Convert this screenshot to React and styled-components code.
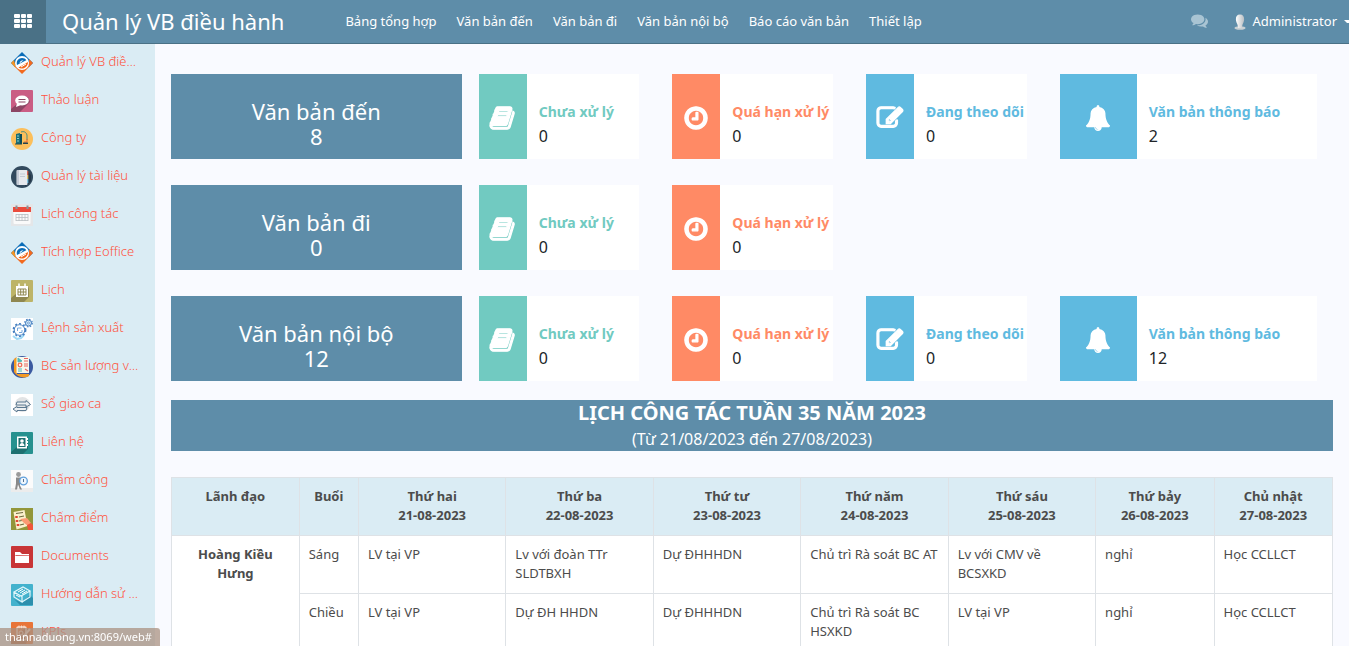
import React from 'react';
import styled, { createGlobalStyle } from 'styled-components';

const GlobalStyle = createGlobalStyle`
    * {
        box-sizing: border-box;
    }

    body {
        margin: 0;
        background: #f9faff;
        color: #4c4c4c;
        font-family: "Noto Sans", "Open Sans", sans-serif;
        font-size: 13px;
        line-height: 19px;
    }

    a {
        color: inherit;
        text-decoration: none;
    }
`;

const faPaths = {
  comments: 'M1408 768q0 139-94 257t-256.5 186.5-353.5 68.5q-86 0-176-16-124 88-278 128-36 9-86 16h-3q-11 0-20.5-8t-11.5-21q-1-3-1-6.5t.5-6.5 2-6l2.5-5 3.5-5.5 4-5 4.5-5 4-4.5q5-6 23-25t26-29.5 22.5-29 25-38.5 20.5-44q-124-72-195-177t-71-224q0-139 94-257t256.5-186.5 353.5-68.5 353.5 68.5 256.5 186.5 94 257zm384 256q0 120-71 224.5t-195 176.5q10 24 20.5 44t25 38.5 22.5 29 26 29.5 23 25q1 1 4 4.5t4.5 5 4 5 3.5 5.5l2.5 5 2 6 .5 6.5-1 6.5q-3 14-13 22t-22 7q-50-7-86-16-154-40-278-128-90 16-176 16-271 0-472-132 58 4 88 4 161 0 309-45t264-129q125-92 192-212t67-254q0-77-23-152 129 71 204 178t75 230z',
  book: 'M1639 478q40 57 18 129l-275 906q-19 64-76.5 107.5t-122.5 43.5h-923q-77 0-148.5-53.5t-99.5-131.5q-24-67-2-127 0-4 3-27t4-37q1-8-3-21.5t-3-19.5q2-11 8-21t16.5-23.5 16.5-23.5q23-38 45-91.5t30-91.5q3-10 .5-30t-.5-28q3-11 17-28t17-23q21-36 42-92t25-90q1-9-2.5-32t.5-28q4-13 22-30.5t22-22.5q19-26 42.5-84.5t27.5-96.5q1-8-3-25.5t-2-26.5q2-8 9-18t18-23 17-21q8-12 16.5-30.5t15-35 16-36 19.5-32 26.5-23.5 36-11.5 47.5 5.5l-1 3q38-9 51-9h761q74 0 114 56t18 130l-274 906q-36 119-71.5 153.5t-128.5 34.5h-869q-27 0-38 15-11 16-1 43 24 70 144 70h923q29 0 56-15.5t35-41.5l300-987q7-22 5-57 38 15 59 43zm-1064 2q-4 13 2 22.5t20 9.5h608q13 0 25.5-9.5t16.5-22.5l21-64q4-13-2-22.5t-20-9.5h-608q-13 0-25.5 9.5t-16.5 22.5zm-83 256q-4 13 2 22.5t20 9.5h608q13 0 25.5-9.5t16.5-22.5l21-64q4-13-2-22.5t-20-9.5h-608q-13 0-25.5 9.5t-16.5 22.5z',
  clock: 'M1024 544v448q0 14-9 23t-23 9h-320q-14 0-23-9t-9-23v-64q0-14 9-23t23-9h224v-352q0-14 9-23t23-9h64q14 0 23 9t9 23zm416 352q0-148-73-273t-198-198-273-73-273 73-198 198-73 273 73 273 198 198 273 73 273-73 198-198 73-273zm224 0q0 209-103 385.5t-279.5 279.5-385.5 103-385.5-103-279.5-279.5-103-385.5 103-385.5 279.5-279.5 385.5-103 385.5 103 279.5 279.5 103 385.5z',
  edit: 'M888 1184l116-116-152-152-116 116v56h96v96h56zm440-720q-16-16-33 1l-350 350q-17 17-1 33t33-1l350-350q17-17 1-33zm80 594v190q0 119-84.5 203.5t-203.5 84.5h-832q-119 0-203.5-84.5t-84.5-203.5v-832q0-119 84.5-203.5t203.5-84.5h832q63 0 117 25 15 7 18 23 3 17-9 29l-49 49q-14 14-32 8-23-6-45-6h-832q-66 0-113 47t-47 113v832q0 66 47 113t113 47h832q66 0 113-47t47-113v-126q0-13 9-22l64-64q15-15 35-7t20 29zm-96-738l288 288-672 672h-288v-288zm444 132l-92 92-288-288 92-92q28-28 68-28t68 28l152 152q28 28 28 68t-28 68z',
  bell: 'M912 1696q0-16-16-16-59 0-101.5-42.5t-42.5-101.5q0-16-16-16t-16 16q0 73 51.5 124.5t124.5 51.5q16 0 16-16zm816-288q0 52-38 90t-90 38h-448q0 106-75 181t-181 75-181-75-75-181h-448q-52 0-90-38t-38-90q50-42 91-88t85-119.5 74.5-158.5 50-206 19.5-260q0-152 117-282.5t307-158.5q-8-19-8-39 0-40 28-68t68-28 68 28 28 68q0 20-8 39 190 28 307 158.5t117 282.5q0 139 19.5 260t50 206 74.5 158.5 85 119.5 91 88z',
};

// weight thickens the glyph, in font units
const FaIcon = ({ name, size, weight = 0 }) => (
  <svg width={size} height={size} viewBox="0 0 1792 1792" fill="currentColor" stroke="currentColor" strokeWidth={weight} overflow="visible" aria-hidden="true">
    <path d={faPaths[name]} />
  </svg>
);

const GridIcon = () => (
  <svg width="19" height="15" viewBox="0 0 19 15" fill="#fff" aria-hidden="true">
    {[0, 5, 10].map(y => [0, 7, 13].map(x => (
      <rect key={`${x}-${y}`} x={x} y={y} width={x === 0 ? 6 : 5} height="4" rx="1" />
    )))}
  </svg>
);

const AvatarIcon = () => (
  <svg width="12" height="16" viewBox="0 0 12 16" aria-hidden="true">
    <defs>
      <linearGradient id="avatar" x1="0" x2="1">
        <stop offset="0" stopColor="#fff" />
        <stop offset="1" stopColor="#b9bec2" />
      </linearGradient>
    </defs>
    <ellipse cx="6" cy="14" rx="5.5" ry="1.8" fill="#c9d0d3" />
    <path d="M6 0.5c3 0 4.3 2 4.1 5.2-.2 2.3-1.2 3.7-1.7 5.2L8 14H4l-.4-3.1C3.1 9.4 2.1 8 1.9 5.7 1.7 2.5 3 .5 6 .5z" fill="url(#avatar)" />
  </svg>
);

const EofficeArt = () => (
  <>
    <path d="M11 0L22 11 18 15 4 15 0 11z" fill="#0a6db8" />
    <path d="M18 7l4 4-11 11L3 14l15-4z" fill="#f26a1e" />
    <path d="M0 11l3-3 2 8z" fill="#f7931e" />
    <circle cx="11" cy="11" r="7" fill="#fff" />
    <path d="M6 13c-1.200-4 1.500-7 5-7 2 0 3.500.8 4.300 2.200z" fill="#0a6db8" />
    <path d="M8.500 11.500c.3-2 1.800-3.200 4-3.200z" fill="#fff" />
    <path d="M7.500 15.500L17 10c0 4-3 6.500-6 6.500-1.500 0-2.500-.3-3.500-1z" fill="#f26a1e" />
    <path d="M10 15l5-3" stroke="#fff" strokeWidth="1" />
  </>
);

const art = {
  eoffice: <EofficeArt />,
  chat: (
    <>
      <rect width="22" height="22" rx="1" fill="#ca5d84" />
      <path d="M0 22V19L6 14 17 7l2 5L9 22z" fill="#8d4664" />
      <ellipse cx="11" cy="10.5" rx="6.8" ry="5" fill="#fff" />
      <path d="M6 13l-1 4 5-2z" fill="#fff" />
      <path d="M7.500 9.500h7M7.500 12h7" stroke="#8d4664" strokeWidth="1" />
    </>
  ),
  company: (
    <>
      <circle cx="11" cy="11" r="11" fill="#fcbf5b" />
      <path d="M5 6l4-1v11H5z" fill="#1b6f79" />
      <path d="M9 6h2v10H9z" fill="#0e4d57" />
      <path d="M6 8h2M6 10.500h2M6 13h2" stroke="#8fd0c8" strokeWidth="1" />
      <path d="M10 4c3-1 5 0 6 3v5" fill="none" stroke="#4c8e80" strokeWidth="1" />
      <path d="M13 14h3v-3" fill="none" stroke="#e46a3c" strokeWidth="1" />
      <path d="M4 16h7" stroke="#1d4e57" strokeWidth="1" />
      <path d="M12 14.500h5v1.500h-5z" fill="#28434d" />
    </>
  ),
  docs: (
    <>
      <circle cx="11" cy="11" r="11" fill="#324a5e" />
      <path d="M16 5l4 4v6l-6 6z" fill="#243748" />
      <rect x="5.5" y="4" width="11" height="15" rx="1" fill="#e6e9ee" />
      <path d="M7 4v15" stroke="#a4afc1" strokeWidth="1" />
      <path d="M9 8h5M9 10.500h5" stroke="#c3cad6" strokeWidth="1" />
      <path d="M16.800 5v4" stroke="#f1543f" strokeWidth="1" />
      <path d="M16.800 9v4" stroke="#ffd05b" strokeWidth="1" />
      <path d="M16.800 13v4" stroke="#84dbff" strokeWidth="1" />
    </>
  ),
  work: (
    <>
      <rect width="22" height="22" fill="#e4e6e8" />
      <rect x="2.5" y="7" width="17" height="13" rx="1" fill="#fafafa" />
      <path d="M2 3h18v5H2z" fill="#ea4b3c" />
      <path d="M5.500 1.500v3.500M16.500 1.500v3.500" stroke="#8c9499" strokeWidth="2" />
      <path d="M5 10.500h12M5 13.500h12M5 16.500h12M5 10v7M8 10v7M11 10v7M14 10v7M17 10v7" stroke="#b8bec2" strokeWidth=".8" />
    </>
  ),
  calendar: (
    <>
      <rect width="22" height="22" rx="1" fill="#bdb468" />
      <path d="M0 18L6 13 17 6l1 3v8l-5 5H0z" fill="#8f8750" />
      <path d="M5 6h12v11H5z" fill="#fff" />
      <path d="M8 3.500v3M14 3.500v3" stroke="#fff" strokeWidth="1.5" />
      <path d="M7 9h8v6H7zM7 12h8M9.700 9v6M12.300 9v6" fill="none" stroke="#8f8750" strokeWidth="1" />
    </>
  ),
  gears: (
    <>
      <rect width="22" height="22" fill="#fff" />
      <path d="M2 18l4 3 4-1 3-3" fill="none" stroke="#9ed8f5" strokeWidth="2" />
      <circle cx="8.5" cy="12" r="6.2" fill="none" stroke="#447fc1" strokeWidth="1.5" strokeDasharray="2 2" />
      <circle cx="8.5" cy="12" r="5.3" fill="#fff" stroke="#447fc1" strokeWidth="1" />
      <path d="M6.500 13v-3h4M8 14.500h3V12" fill="none" stroke="#74a8df" strokeWidth="1" />
      <circle cx="17.5" cy="5" r="3.8" fill="none" stroke="#447fc1" strokeWidth="1.2" strokeDasharray="1.5 1.5" />
      <circle cx="17.5" cy="5" r="3" fill="#d6eaf9" stroke="#447fc1" strokeWidth="1" />
      <circle cx="17.5" cy="5" r="1" fill="#fff" stroke="#447fc1" strokeWidth=".7" />
    </>
  ),
  report: (
    <>
      <circle cx="11" cy="11" r="11" fill="#3b5aa0" />
      <path d="M3 3l3-2v17h12v2c-5 3-12 1-15-4z" fill="#f49b25" />
      <rect x="5.5" y="1" width="12.5" height="16" fill="#f6f8ee" />
      <path d="M7 2v4l4-1zM7 13h4M7 15h4" fill="#53b8b6" stroke="#53b8b6" strokeWidth="1" />
      <circle cx="9" cy="9" r="1.8" fill="none" stroke="#f16d5b" strokeWidth="1.3" />
      <path d="M13 2.500h4M13 5h4M13 8h4M13 10h4M14 13l3 2" fill="none" stroke="#e9665d" strokeWidth="1.2" />
    </>
  ),
  handover: (
    <>
      <rect width="22" height="22" fill="#fff" />
      <circle cx="11.5" cy="10.5" r="7.5" fill="#e2e4e5" />
      <path d="M6 8h9V6.500l4.500 4L15 13v-2H5z" fill="#edf0f2" stroke="#5b7890" strokeWidth="1" />
      <path d="M16 13.500l-1 3H6V18l-4-3 4-2.500v1z" fill="#edf0f2" stroke="#5b7890" strokeWidth="1" />
    </>
  ),
  contact: (
    <>
      <rect width="22" height="22" rx="1" fill="#27918f" />
      <path d="M0 20L6 15 16 5l1 12-5 5H0z" fill="#1d7070" />
      <rect x="6" y="4.5" width="10" height="12" fill="#fff" />
      <rect x="7.5" y="6" width="7" height="9" fill="#1d7070" />
      <circle cx="11" cy="9" r="1.8" fill="#fff" />
      <path d="M8.500 14c0-4 5-4 5 0z" fill="#fff" />
      <path d="M16.500 6v9" stroke="#fff" strokeWidth="1" strokeDasharray="2 1" />
    </>
  ),
  attendance: (
    <>
      <rect width="22" height="22" fill="#fbfbfb" />
      <path d="M0 18h22v4H0z" fill="#ececec" />
      <circle cx="7.5" cy="4.5" r="2.4" fill="#9a9a9a" />
      <path d="M5 7.500h5l2 4-3 1v3l2 4H9l-2-5-1 5H4l1-6z" fill="#8a8a8a" />
      <circle cx="12.5" cy="11" r="3.8" fill="#eef6fd" stroke="#5f9fdc" strokeWidth="1.3" />
      <path d="M12.500 9v3" stroke="#56728f" strokeWidth="1" />
    </>
  ),
  grading: (
    <>
      <rect width="22" height="22" fill="#92963a" />
      <path d="M2.500 4l11-2 3 16-11 3.500z" fill="#fbf0cc" />
      <path d="M5 5.500l7-1M8 9l5-1M8 13l3-.5M9 17l4-1" stroke="#6c6a3e" strokeWidth="1.2" />
      <path d="M5 9h1M5.500 13h1M6.500 17h1" stroke="#e0442e" strokeWidth="2" strokeLinecap="round" />
      <path d="M9 11l7-1 4 5-3 3-4-3z" fill="#fb9a72" />
      <path d="M16 17l4-2 2 2v5h-5z" fill="#f0553a" />
    </>
  ),
  folder: (
    <>
      <rect width="22" height="22" rx="1" fill="#c83537" />
      <path d="M4 6h5l2 2h7v1.500H4z" fill="#fff" />
      <path d="M4 10l14-1v8H4z" fill="#fff" />
      <path d="M5 9.500h13" stroke="#c83537" strokeWidth=".6" />
    </>
  ),
  guide: (
    <>
      <rect width="22" height="22" rx="1" fill="#43b2cd" />
      <path d="M3 15l8 4 8-8 3 3v7H9z" fill="#2c8fad" />
      <path d="M3 8l9-5 7 4-9 5zM3 8v5l8 5v-6M19 7v6l-8 5" fill="none" stroke="#e2f7fb" strokeWidth="1.2" />
      <path d="M7 8l5-3M9 9l5-3M11 10l5-3M5 11l4 2" stroke="#fff" strokeWidth="1" />
    </>
  ),
  kpi: (
    <>
      <rect width="22" height="22" rx="1" fill="#e87539" />
      <path d="M0 18L6 14l9-9 4 5-4 12H0z" fill="#ab5b34" />
      <rect x="6" y="5" width="9" height="13" rx="1" fill="none" stroke="#f4dfd2" strokeWidth="1.5" />
      <path d="M8 3.500v3M10.500 3.500v3M13 3.500v3" stroke="#f4dfd2" strokeWidth="1" />
      <circle cx="10" cy="11" r="2" fill="none" stroke="#f4dfd2" strokeWidth="1" />
      <path d="M12 15l7-8" stroke="#f4dfd2" strokeWidth="2" />
    </>
  ),
};

const navItems = ['Bảng tổng hợp', 'Văn bản đến', 'Văn bản đi', 'Văn bản nội bộ', 'Báo cáo văn bản', 'Thiết lập'];

const apps = [
  { icon: 'eoffice', name: 'Quản lý VB điều hành' },
  { icon: 'chat', name: 'Thảo luận' },
  { icon: 'company', name: 'Công ty' },
  { icon: 'docs', name: 'Quản lý tài liệu' },
  { icon: 'work', name: 'Lịch công tác' },
  { icon: 'eoffice', name: 'Tích hợp Eoffice' },
  { icon: 'calendar', name: 'Lịch' },
  { icon: 'gears', name: 'Lệnh sản xuất' },
  { icon: 'report', name: 'BC sản lượng vận hành' },
  { icon: 'handover', name: 'Sổ giao ca' },
  { icon: 'contact', name: 'Liên hệ' },
  { icon: 'attendance', name: 'Chấm công' },
  { icon: 'grading', name: 'Chấm điểm' },
  { icon: 'folder', name: 'Documents' },
  { icon: 'guide', name: 'Hướng dẫn sử dụng' },
  { icon: 'kpi', name: 'KPIs' },
];

const pending = { icon: 'book', label: 'Chưa xử lý', color: '#71cac1', value: 0 };
const overdue = { icon: 'clock', label: 'Quá hạn xử lý', color: '#ff8a65', value: 0 };
const following = { icon: 'edit', label: 'Đang theo dõi', color: '#5fbae0', value: 0 };
const notice = { icon: 'bell', label: 'Văn bản thông báo', color: '#5fbae0', value: 2 };

const groups = [
  { title: 'Văn bản đến', total: 8, cards: [pending, overdue, following, notice] },
  { title: 'Văn bản đi', total: 0, cards: [pending, overdue] },
  { title: 'Văn bản nội bộ', total: 12, cards: [pending, overdue, following, { ...notice, value: 12 }] },
];

const days = [
  ['Thứ hai', '21-08-2023'],
  ['Thứ ba', '22-08-2023'],
  ['Thứ tư', '23-08-2023'],
  ['Thứ năm', '24-08-2023'],
  ['Thứ sáu', '25-08-2023'],
  ['Thứ bảy', '26-08-2023'],
  ['Chủ nhật', '27-08-2023'],
];

const morning = ['LV tại VP', 'Lv với đoàn TTr SLDTBXH', 'Dự ĐHHHDN', 'Chủ trì Rà soát BC AT', 'Lv với CMV về BCSXKD', 'nghỉ', 'Học CCLLCT'];
const afternoon = ['LV tại VP', 'Dự ĐH HHDN', 'Dự ĐHHHDN', 'Chủ trì Rà soát BC HSXKD', 'LV tại VP', 'nghỉ', 'Học CCLLCT'];

const App = () => {
  return (
    <Shell>
      <GlobalStyle />
      <Header>
        <AppsButton type="button" aria-label="Apps"><GridIcon /></AppsButton>
        <Brand href="#">Quản lý VB điều hành</Brand>
        <Nav>
          {navItems.map(item => <a key={item} href="#">{item}</a>)}
        </Nav>
        <ChatButton type="button" aria-label="Messages"><FaIcon name="comments" size={17} /></ChatButton>
        <UserButton type="button">
          <AvatarIcon />
          Administrator
          <Caret />
        </UserButton>
      </Header>
      <Body>
        <Sidebar>
          {apps.map(app => (
            <AppLink key={app.name} href="#">
              <svg width="22" height="22" viewBox="0 0 22 22" aria-hidden="true">{art[app.icon]}</svg>
              <span>{app.name}</span>
            </AppLink>
          ))}
        </Sidebar>
        <Main>
          {groups.map(group => (
            <StatRow key={group.title}>
              <Total>
                <span>{group.title}</span>
                <span>{group.total}</span>
              </Total>
              {group.cards.map(card => (
                <Card key={card.label}>
                  <CardIcon $color={card.color}>
                    <FaIcon name={card.icon} size={26} weight={card.icon === 'bell' ? 0 : 90} />
                  </CardIcon>
                  <CardText>
                    <CardLabel $color={card.color}>{card.label}</CardLabel>
                    <CardValue>{card.value}</CardValue>
                  </CardText>
                </Card>
              ))}
            </StatRow>
          ))}
          <WeekBanner>
            <h1>LỊCH CÔNG TÁC TUẦN 35 NĂM 2023</h1>
            <p>(Từ 21/08/2023 đến 27/08/2023)</p>
          </WeekBanner>
          <Schedule>
            <colgroup>
              <Col $width="11%" />
              <Col $width="5.1%" />
              {days.map(([name], i) => <Col key={name} $width={i < 5 ? '12.7%' : '10.2%'} />)}
            </colgroup>
            <thead>
              <tr>
                <th>Lãnh đạo</th>
                <th>Buổi</th>
                {days.map(([name, date]) => <th key={name}>{name}<br />{date}</th>)}
              </tr>
            </thead>
            <tbody>
              <tr>
                <th rowSpan="2" scope="rowgroup">Hoàng Kiều Hưng</th>
                <td>Sáng</td>
                {morning.map((text, i) => <td key={i}>{text}</td>)}
              </tr>
              <tr>
                <td>Chiều</td>
                {afternoon.map((text, i) => <td key={i}>{text}</td>)}
              </tr>
            </tbody>
          </Schedule>
        </Main>
      </Body>
      <StatusBubble>thannaduong.vn:8069/web#</StatusBubble>
    </Shell>
  )
}

export default App;

const Shell = styled.div`
    display: flex;
    flex-direction: column;
    height: 100vh;
    overflow: hidden;
`;

const Header = styled.header`
    display: flex;
    flex: none;
    height: 44px;
    border-bottom: 1px solid #4a7186;
    background: #5e8da9;
    color: #fff;
    white-space: nowrap;
`;

const AppsButton = styled.button`
    display: flex;
    align-items: center;
    justify-content: center;
    width: 46px;
    padding: 0;
    border: 0;
    background: #4a7186;
    cursor: pointer;
`;

const Brand = styled.a`
    padding-left: 16px;
    font-size: 22px;
    line-height: 43px;
`;

const Nav = styled.nav`
    display: flex;
    flex: 1;
    gap: 20px;
    padding-left: 61px;
    line-height: 43px;
`;

const ChatButton = styled.button`
    display: flex;
    align-items: center;
    padding: 0 26px 2px 0;
    border: 0;
    background: none;
    color: #a9c4d3;
    cursor: pointer;
`;

const UserButton = styled.button`
    display: flex;
    align-items: center;
    gap: 7px;
    padding: 0;
    border: 0;
    background: none;
    color: inherit;
    font: inherit;
    cursor: pointer;
`;

const Caret = styled.span`
    width: 5px;
    border-top: 3px solid #fff;
    border-left: 3px solid transparent;
`;

const Body = styled.div`
    display: flex;
    flex: 1;
    min-height: 0;
`;

const Sidebar = styled.nav`
    flex: none;
    width: 155px;
    overflow-y: auto;
    scrollbar-width: none;
    background: #daecf4;
`;

const AppLink = styled.a`
    display: flex;
    gap: 8px;
    height: 38px;
    padding: 8px 16px 0 11px;
    color: #ff5340;
    font-weight: 300;

    svg {
        flex: none;
    }

    span {
        overflow: hidden;
        text-overflow: ellipsis;
        white-space: nowrap;
    }
`;

const Main = styled.main`
    flex: 1;
    min-width: 0;
    padding: 30px 16px 0;
    overflow-y: auto;
    scrollbar-width: none;
`;

const StatRow = styled.section`
    display: grid;
    grid-template-columns: 3fr 2fr 2fr 2fr 3fr;
    margin-bottom: 26px;
`;

const Total = styled.div`
    display: flex;
    flex-direction: column;
    height: 85px;
    padding-top: 25px;
    background: #5e8da9;
    color: #fff;
    font-size: 22px;
    line-height: 25px;
    text-align: center;
`;

const Card = styled.div`
    display: flex;
    margin: 0 16px 0 17px;
    min-width: 0;
    background: #fff;
`;

const CardIcon = styled.div`
    display: flex;
    flex: none;
    align-items: center;
    justify-content: center;
    width: 30%;
    padding-top: 3px;
    background: ${props => props.$color};
    color: #fff;
`;

const CardText = styled.div`
    padding: 26px 0 0 12px;
    line-height: 24px;
    white-space: nowrap;
`;

const CardLabel = styled.div`
    color: ${props => props.$color};
    font-size: 14px;
    font-weight: 700;
`;

const CardValue = styled.div`
    color: #212529;
    font-size: 16px;
`;

const WeekBanner = styled.section`
    margin: -7px 0 26px;
    height: 51px;
    background: #5e8da9;
    color: #fff;
    line-height: 26px;
    text-align: center;

    h1 {
        margin: 0;
        font-size: 20px;
        font-weight: 700;
    }

    p {
        margin: 0;
        font-size: 16px;
    }
`;

const Schedule = styled.table`
    width: 100%;
    table-layout: fixed;
    border-collapse: collapse;
    background: #fff;

    th,
    td {
        padding: 9px 9px 10px;
        border: 1px solid #dee2e6;
        text-align: left;
        vertical-align: top;
    }

    th {
        font-weight: 700;
        text-align: center;
    }

    thead th {
        background: #daecf4;
    }
`;

const Col = styled.col`
    width: ${props => props.$width};
`;

const StatusBubble = styled.div`
    position: fixed;
    bottom: 0;
    left: 0;
    padding: 0 8px 0 5px;
    border-radius: 0 3px 0 0;
    background: rgba(170, 145, 130, 0.75);
    color: #fff;
    font-size: 11px;
    line-height: 18px;
`;
